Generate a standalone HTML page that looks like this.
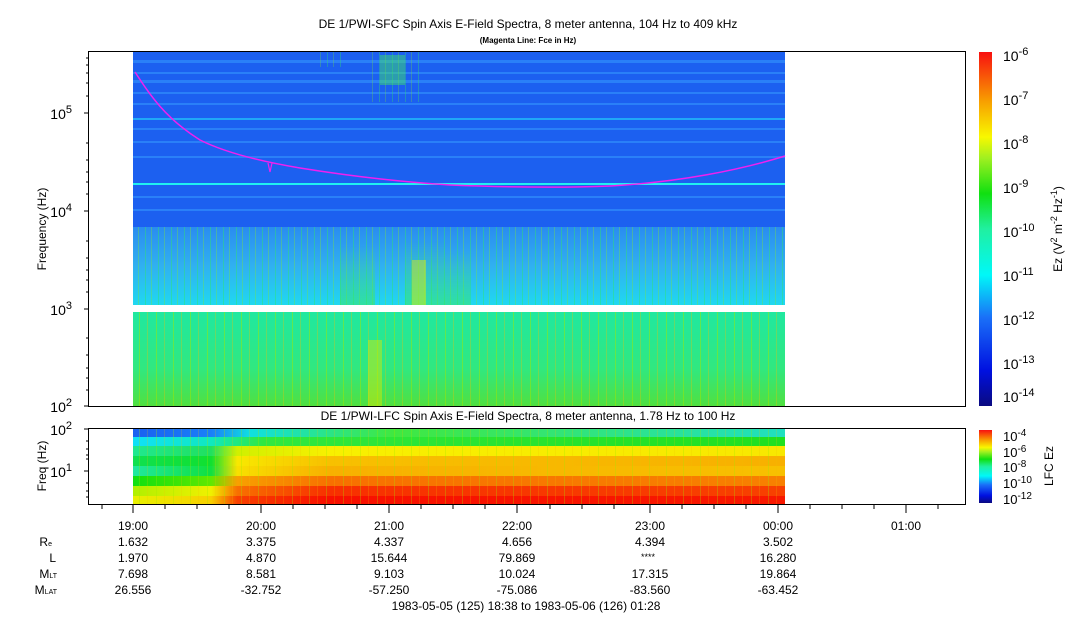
<!DOCTYPE html>
<html><head><meta charset="utf-8"><style>
body{margin:0;background:#fff;width:1083px;height:620px;overflow:hidden}
svg{display:block;font-family:"Liberation Sans",sans-serif}
</style></head><body>
<svg width="1083" height="620" xmlns="http://www.w3.org/2000/svg">
<defs>
<linearGradient id="cb" x1="0" y1="1" x2="0" y2="0">
<stop offset="0" stop-color="#0a0a80"/><stop offset="0.1" stop-color="#0010e0"/><stop offset="0.25" stop-color="#1a70f8"/><stop offset="0.37" stop-color="#00f8f8"/><stop offset="0.5" stop-color="#20f0a0"/><stop offset="0.6" stop-color="#10e010"/><stop offset="0.7" stop-color="#a0f020"/><stop offset="0.76" stop-color="#f8f800"/><stop offset="0.86" stop-color="#f8a000"/><stop offset="1" stop-color="#f81010"/>
</linearGradient>
<linearGradient id="cyanreg" x1="0" y1="0" x2="0" y2="1">
<stop offset="0" stop-color="#2a8cf0"/><stop offset="0.5" stop-color="#30b0f0"/><stop offset="1" stop-color="#20d8f0"/>
</linearGradient>
<linearGradient id="greenreg" x1="0" y1="0" x2="0" y2="1">
<stop offset="0" stop-color="#20e8a0"/><stop offset="0.6" stop-color="#30e880"/><stop offset="1" stop-color="#50e040"/>
</linearGradient>
<linearGradient id="fade" x1="0" y1="0" x2="0" y2="1"><stop offset="0" stop-color="#40e850" stop-opacity="0"/><stop offset="1" stop-color="#40e850" stop-opacity="0.8"/></linearGradient>
<pattern id="streak" width="13" height="10" patternUnits="userSpaceOnUse"><rect x="2" width="1" height="10" fill="#30e860" opacity="0.6"/><rect x="8" width="1" height="10" fill="#80e830" opacity="0.5"/></pattern>
<pattern id="streak2" width="17" height="10" patternUnits="userSpaceOnUse"><rect x="3" width="1" height="10" fill="#a0e800" opacity="0.6"/><rect x="11" width="1" height="10" fill="#f0c000" opacity="0.4"/></pattern>
<linearGradient id="r1" x1="0" x2="1"><stop offset="0" stop-color="#1a60f0"/><stop offset="0.12" stop-color="#1a80f8"/><stop offset="0.18" stop-color="#10e0e0"/><stop offset="0.4" stop-color="#40e840"/><stop offset="1" stop-color="#20e0c0"/></linearGradient>
<linearGradient id="r2" x1="0" x2="1"><stop offset="0" stop-color="#10e0f8"/><stop offset="0.12" stop-color="#10e8c0"/><stop offset="0.2" stop-color="#30e840"/><stop offset="1" stop-color="#20e020"/></linearGradient>
<linearGradient id="r3" x1="0" x2="1"><stop offset="0" stop-color="#20e890"/><stop offset="0.12" stop-color="#20e060"/><stop offset="0.16" stop-color="#d0f000"/><stop offset="0.3" stop-color="#f8f000"/><stop offset="1" stop-color="#f8e800"/></linearGradient>
<linearGradient id="r4" x1="0" x2="1"><stop offset="0" stop-color="#10e050"/><stop offset="0.12" stop-color="#10e030"/><stop offset="0.16" stop-color="#f8e800"/><stop offset="0.3" stop-color="#f8c000"/><stop offset="1" stop-color="#f8b000"/></linearGradient>
<linearGradient id="r5" x1="0" x2="1"><stop offset="0" stop-color="#20e8a0"/><stop offset="0.12" stop-color="#10e040"/><stop offset="0.16" stop-color="#f8e000"/><stop offset="0.3" stop-color="#f8b000"/><stop offset="1" stop-color="#f8c000"/></linearGradient>
<linearGradient id="r6" x1="0" x2="1"><stop offset="0" stop-color="#10e010"/><stop offset="0.12" stop-color="#60e800"/><stop offset="0.16" stop-color="#f8a000"/><stop offset="0.3" stop-color="#f87000"/><stop offset="1" stop-color="#f88000"/></linearGradient>
<linearGradient id="r7" x1="0" x2="1"><stop offset="0" stop-color="#b0f000"/><stop offset="0.12" stop-color="#f0f000"/><stop offset="0.16" stop-color="#f87000"/><stop offset="0.3" stop-color="#f83000"/><stop offset="1" stop-color="#f84000"/></linearGradient>
<linearGradient id="r8" x1="0" x2="1"><stop offset="0" stop-color="#e8f000"/><stop offset="0.12" stop-color="#f8d000"/><stop offset="0.16" stop-color="#f84000"/><stop offset="0.3" stop-color="#f81000"/><stop offset="1" stop-color="#f81800"/></linearGradient>
</defs>
<text x="528" y="28" font-size="12" text-anchor="middle">DE 1/PWI-SFC  Spin Axis E-Field Spectra, 8 meter antenna, 104 Hz to 409 kHz</text>
<text x="528" y="43" font-size="8" text-anchor="middle" font-weight="bold">(Magenta Line: Fce in Hz)</text>
<!-- upper data -->
<rect x="133" y="52" width="652" height="175" fill="#1c60f0"/>
<g fill="#2a80f8">
<rect x="133" y="60" width="652" height="3"/><rect x="133" y="72" width="652" height="2"/><rect x="133" y="80" width="652" height="3"/><rect x="133" y="92" width="652" height="2"/><rect x="133" y="103" width="652" height="2"/><rect x="133" y="128" width="652" height="2"/><rect x="133" y="141" width="652" height="2"/><rect x="133" y="156" width="652" height="2"/><rect x="133" y="196" width="652" height="2"/><rect x="133" y="209" width="652" height="2"/>
</g>
<rect x="133" y="118" width="652" height="2" fill="#20a8f8"/>
<rect x="133" y="183" width="652" height="2" fill="#20f0f0"/>
<g opacity="0.55"><rect x="370" y="52" width="50" height="50" fill="url(#streak)"/><rect x="320" y="52" width="25" height="15" fill="url(#streak)"/></g>
<rect x="380" y="55" width="25" height="30" fill="#40e860" opacity="0.45"/>
<rect x="133" y="227" width="652" height="78" fill="url(#cyanreg)"/>
<rect x="133" y="227" width="652" height="78" fill="url(#streak)" opacity="0.7"/>
<g opacity="0.6"><rect x="340" y="245" width="35" height="60" fill="url(#fade)"/><rect x="405" y="240" width="40" height="65" fill="url(#fade)"/><rect x="445" y="250" width="25" height="55" fill="url(#fade)"/></g>
<rect x="412" y="260" width="14" height="45" fill="#e8f000" opacity="0.45"/>
<rect x="133" y="312" width="652" height="94" fill="url(#greenreg)"/>
<rect x="133" y="312" width="652" height="94" fill="url(#streak2)" opacity="0.8"/>
<rect x="368" y="340" width="14" height="66" fill="#e0e800" opacity="0.45"/>
<path d="M135,72 C150,95 165,118 200,140 C230,155 270,163 300,168 C350,176 400,182 450,185 C500,187 560,188 610,186 C680,182 740,170 785,156" fill="none" stroke="#f020f0" stroke-width="1.5"/>
<path d="M268,163 L270,172 L272,163" fill="none" stroke="#f020f0" stroke-width="1.2"/>
<rect x="88.5" y="51.5" width="877" height="355" fill="none" stroke="#000"/>
<!-- y axis upper -->
<g stroke="#000">
<line x1="84" y1="113" x2="88" y2="113"/><line x1="84" y1="211" x2="88" y2="211"/><line x1="84" y1="309" x2="88" y2="309"/><line x1="84" y1="406" x2="88" y2="406"/>
<line x1="86" y1="58" x2="88" y2="58"/><line x1="86" y1="65" x2="88" y2="65"/><line x1="86" y1="73" x2="88" y2="73"/><line x1="86" y1="83" x2="88" y2="83"/><line x1="86" y1="96" x2="88" y2="96"/><line x1="86" y1="143" x2="88" y2="143"/><line x1="86" y1="160" x2="88" y2="160"/><line x1="86" y1="172" x2="88" y2="172"/><line x1="86" y1="182" x2="88" y2="182"/><line x1="86" y1="194" x2="88" y2="194"/><line x1="86" y1="241" x2="88" y2="241"/><line x1="86" y1="258" x2="88" y2="258"/><line x1="86" y1="270" x2="88" y2="270"/><line x1="86" y1="280" x2="88" y2="280"/><line x1="86" y1="292" x2="88" y2="292"/><line x1="86" y1="338" x2="88" y2="338"/><line x1="86" y1="355" x2="88" y2="355"/><line x1="86" y1="368" x2="88" y2="368"/><line x1="86" y1="378" x2="88" y2="378"/><line x1="86" y1="390" x2="88" y2="390"/>
</g>
<g font-size="14" text-anchor="end"><text x="72" y="119">10<tspan dy="-6" font-size="11">5</tspan></text><text x="72" y="217">10<tspan dy="-6" font-size="11">4</tspan></text><text x="72" y="315">10<tspan dy="-6" font-size="11">3</tspan></text><text x="72" y="412">10<tspan dy="-6" font-size="11">2</tspan></text></g>
<text transform="translate(46,229) rotate(-90)" font-size="12" text-anchor="middle">Frequency (Hz)</text>
<!-- colorbar upper -->
<rect x="979" y="52" width="13" height="354" fill="url(#cb)"/>
<g font-size="14"><text x="1003" y="61">10<tspan dy="-6" font-size="11">-6</tspan></text><text x="1003" y="105">10<tspan dy="-6" font-size="11">-7</tspan></text><text x="1003" y="149">10<tspan dy="-6" font-size="11">-8</tspan></text><text x="1003" y="193">10<tspan dy="-6" font-size="11">-9</tspan></text><text x="1003" y="237">10<tspan dy="-6" font-size="11">-10</tspan></text><text x="1003" y="281">10<tspan dy="-6" font-size="11">-11</tspan></text><text x="1003" y="325">10<tspan dy="-6" font-size="11">-12</tspan></text><text x="1003" y="369">10<tspan dy="-6" font-size="11">-13</tspan></text><text x="1003" y="402">10<tspan dy="-6" font-size="11">-14</tspan></text></g>
<text transform="translate(1062,229) rotate(-90)" font-size="12" text-anchor="middle">Ez (V<tspan dy="-5" font-size="9">2</tspan><tspan dy="5"> m</tspan><tspan dy="-5" font-size="9">-2</tspan><tspan dy="5"> Hz</tspan><tspan dy="-5" font-size="9">-1</tspan><tspan dy="5">)</tspan></text>
<text x="528" y="420" font-size="12" text-anchor="middle">DE 1/PWI-LFC  Spin Axis E-Field Spectra, 8 meter antenna, 1.78 Hz to 100 Hz</text>
<!-- lower panel -->
<rect x="133" y="429" width="652" height="8" fill="url(#r1)"/>
<rect x="133" y="437" width="652" height="9" fill="url(#r2)"/>
<rect x="133" y="446" width="652" height="10" fill="url(#r3)"/>
<rect x="133" y="456" width="652" height="10" fill="url(#r4)"/>
<rect x="133" y="466" width="652" height="10" fill="url(#r5)"/>
<rect x="133" y="476" width="652" height="10" fill="url(#r6)"/>
<rect x="133" y="486" width="652" height="10" fill="url(#r7)"/>
<rect x="133" y="496" width="652" height="8" fill="url(#r8)"/>
<rect x="133" y="429" width="652" height="75" fill="url(#streak2)" opacity="0.5"/>
<rect x="88.5" y="428.5" width="877" height="76" fill="none" stroke="#000"/>
<g stroke="#000"><line x1="84" y1="429" x2="88" y2="429"/><line x1="84" y1="471" x2="88" y2="471"/><line x1="86" y1="441" x2="88" y2="441"/><line x1="86" y1="449" x2="88" y2="449"/><line x1="86" y1="455" x2="88" y2="455"/><line x1="86" y1="459" x2="88" y2="459"/><line x1="86" y1="483" x2="88" y2="483"/><line x1="86" y1="491" x2="88" y2="491"/><line x1="86" y1="497" x2="88" y2="497"/></g>
<g font-size="14" text-anchor="end"><text x="72" y="435">10<tspan dy="-6" font-size="11">2</tspan></text><text x="72" y="477">10<tspan dy="-6" font-size="11">1</tspan></text></g>
<text transform="translate(46,466) rotate(-90)" font-size="12" text-anchor="middle">Freq (Hz)</text>
<rect x="979" y="430" width="13" height="73" fill="url(#cb)"/>
<g font-size="13"><text x="1003" y="441">10<tspan dy="-5" font-size="10">-4</tspan></text><text x="1003" y="457">10<tspan dy="-5" font-size="10">-6</tspan></text><text x="1003" y="472">10<tspan dy="-5" font-size="10">-8</tspan></text><text x="1003" y="488">10<tspan dy="-5" font-size="10">-10</tspan></text><text x="1003" y="504">10<tspan dy="-5" font-size="10">-12</tspan></text></g>
<text transform="translate(1053,466) rotate(-90)" font-size="12" text-anchor="middle">LFC Ez</text>
<!-- time axis -->
<g stroke="#000">
<line x1="102" y1="505" x2="102" y2="509"/><line x1="133" y1="505" x2="133" y2="513"/><line x1="165" y1="505" x2="165" y2="509"/><line x1="197" y1="505" x2="197" y2="509"/><line x1="229" y1="505" x2="229" y2="509"/><line x1="261" y1="505" x2="261" y2="513"/><line x1="293" y1="505" x2="293" y2="509"/><line x1="325" y1="505" x2="325" y2="509"/><line x1="357" y1="505" x2="357" y2="509"/><line x1="389" y1="505" x2="389" y2="513"/><line x1="421" y1="505" x2="421" y2="509"/><line x1="453" y1="505" x2="453" y2="509"/><line x1="485" y1="505" x2="485" y2="509"/><line x1="517" y1="505" x2="517" y2="513"/><line x1="550" y1="505" x2="550" y2="509"/><line x1="582" y1="505" x2="582" y2="509"/><line x1="614" y1="505" x2="614" y2="509"/><line x1="650" y1="505" x2="650" y2="513"/><line x1="682" y1="505" x2="682" y2="509"/><line x1="714" y1="505" x2="714" y2="509"/><line x1="746" y1="505" x2="746" y2="509"/><line x1="778" y1="505" x2="778" y2="513"/><line x1="810" y1="505" x2="810" y2="509"/><line x1="842" y1="505" x2="842" y2="509"/><line x1="874" y1="505" x2="874" y2="509"/><line x1="906" y1="505" x2="906" y2="513"/><line x1="938" y1="505" x2="938" y2="509"/>
</g>
<g font-size="12" text-anchor="middle">
<text x="133" y="530">19:00</text><text x="261" y="530">20:00</text><text x="389" y="530">21:00</text><text x="517" y="530">22:00</text><text x="650" y="530">23:00</text><text x="778" y="530">00:00</text><text x="906" y="530">01:00</text>
<text x="133" y="546">1.632</text><text x="261" y="546">3.375</text><text x="389" y="546">4.337</text><text x="517" y="546">4.656</text><text x="650" y="546">4.394</text><text x="778" y="546">3.502</text>
<text x="133" y="562">1.970</text><text x="261" y="562">4.870</text><text x="389" y="562">15.644</text><text x="517" y="562">79.869</text><text x="648" y="560" font-size="9">****</text><text x="778" y="562">16.280</text>
<text x="133" y="578">7.698</text><text x="261" y="578">8.581</text><text x="389" y="578">9.103</text><text x="517" y="578">10.024</text><text x="650" y="578">17.315</text><text x="778" y="578">19.864</text>
<text x="133" y="594">26.556</text><text x="261" y="594">-32.752</text><text x="389" y="594">-57.250</text><text x="517" y="594">-75.086</text><text x="650" y="594">-83.560</text><text x="778" y="594">-63.452</text>
<text x="526" y="610">1983-05-05 (125) 18:38 to 1983-05-06 (126) 01:28</text>
</g>
<g font-size="12" text-anchor="end">
<text x="52" y="546">R<tspan font-size="7">e</tspan></text><text x="56" y="562">L</text><text x="57" y="578">M<tspan font-size="7">LT</tspan></text><text x="57" y="594">M<tspan font-size="7">LAT</tspan></text>
</g>
</svg>
</body></html>
